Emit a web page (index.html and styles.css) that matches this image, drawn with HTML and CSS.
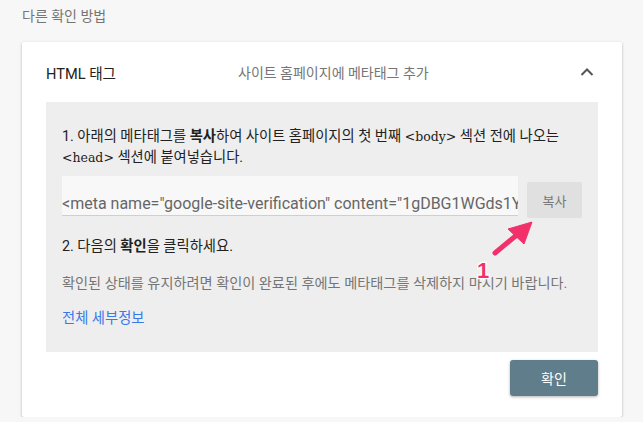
FILE: index.html
```html
<!DOCTYPE html>
<html lang="ko">
<head>
<meta charset="utf-8">
<link rel="stylesheet" href="styles.css">
</head>
<body>
<div class="page">
  <div class="section-title">다른 확인 방법</div>
  <div class="card">
    <div class="card-header">
      <div class="method">HTML 태그</div>
      <div class="method-desc">사이트 홈페이지에 메타태그 추가</div>
      <svg class="chevron" width="14" height="10" viewBox="0 0 14 10"><path d="M1.5 8 L7 2.5 L12.5 8" fill="none" stroke="#555" stroke-width="2"/></svg>
    </div>
    <div class="panel">
      <p class="step">1. 아래의 메타태그를 <b>복사</b>하여 사이트 홈페이지의 첫 번째 <code>&lt;body&gt;</code> 섹션 전에 나오는 <code>&lt;head&gt;</code> 섹션에 붙여넣습니다.</p>
      <div class="copy-row">
        <div class="meta-field"><span>&lt;meta name="google-site-verification" content="1gDBG1WGds1YxK7q"</span></div>
        <button class="copy-btn">복사</button>
      </div>
      <p class="step step2">2. 다음의 <b>확인</b>을 클릭하세요.</p>
      <p class="note">확인된 상태를 유지하려면 확인이 완료된 후에도 메타태그를 삭제하지 마시기 바랍니다.</p>
      <a class="details" href="#">전체 세부정보</a>
    </div>
    <div class="actions">
      <button class="confirm-btn">확인</button>
    </div>
  </div>
  <svg class="annotation" width="80" height="80" viewBox="0 0 80 80">
    <path d="M23 39 L46 20" stroke="#f2316b" stroke-width="5" stroke-linecap="round"/>
    <path d="M60 8 L36 15 L52 30 Z" fill="#f2316b" stroke="#f2316b" stroke-width="1" stroke-linejoin="round"/>
    <text x="5" y="64" class="anno-num">1</text>
  </svg>
</div>
</body>
</html>
```
FILE: styles.css
```css
html, body {
  margin: 0;
  padding: 0;
  background: #f7f7f7;
}
body {
  font-family: Roboto, "Noto Sans CJK KR", sans-serif;
  color: #212121;
}
.page {
  position: relative;
  padding: 6px 21px 0 22px;
}
.section-title {
  font-size: 14px;
  line-height: 20px;
  color: #757575;
  height: 36px;
}
.card {
  width: 600px;
  background: #fff;
  border-radius: 2px;
  box-shadow: 0 1px 3px rgba(0,0,0,0.28);
}
.card-header {
  display: flex;
  align-items: center;
  height: 60px;
  padding: 0 28px 0 24px;
}
.method {
  width: 192px;
  font-size: 14.6px;
  color: #212121;
}
.method-desc {
  flex: 1;
  font-size: 14px;
  color: #757575;
}
.chevron {
  display: block;
}
.panel {
  margin: 0 24px;
  background: #eeeeee;
  padding: 24px 16px 24px 16px;
  height: 202px;
}
.step {
  margin: 0;
  font-size: 14.3px;
  line-height: 21px;
  color: #212121;
}
.step b {
  font-weight: 700;
}
code {
  font-family: "DejaVu Serif", serif;
  font-size: 12.5px;
}
.copy-row {
  display: flex;
  align-items: flex-start;
  margin-top: 8px;
  gap: 9px;
}
.meta-field {
  width: 456px;
  height: 39px;
  background: #f8f8f8;
  border-bottom: 1px solid #cfcfcf;
  overflow: hidden;
  white-space: nowrap;
  display: flex;
  align-items: flex-end;
}
.meta-field span {
  font-size: 16px;
  color: #666;
  line-height: 20px;
  padding-bottom: 1px;
}
.copy-btn {
  margin-top: 6px;
  width: 55px;
  height: 36px;
  border: none;
  border-radius: 2px;
  background: #e0e0e0;
  color: #777;
  font-family: Roboto, "Noto Sans CJK KR", sans-serif;
  font-size: 13px;
}
.step2 {
  margin-top: 18px;
}
.note {
  margin: 16px 0 0;
  font-size: 14.2px;
  line-height: 21px;
  color: #757575;
}
.details {
  display: block;
  margin-top: 14px;
  font-size: 14.3px;
  line-height: 21px;
  color: #3b78e7;
  text-decoration: none;
}
.actions {
  display: flex;
  justify-content: flex-end;
  padding: 8px 24px 21px;
}
.confirm-btn {
  width: 88px;
  height: 36px;
  border: none;
  border-radius: 3px;
  background: #607d8b;
  color: #fff;
  font-family: Roboto, "Noto Sans CJK KR", sans-serif;
  font-size: 14px;
  box-shadow: 0 1px 3px rgba(0,0,0,0.3);
}
.annotation {
  position: absolute;
  left: 472px;
  top: 214px;
}
.anno-num {
  font-family: "Liberation Sans", sans-serif;
  font-weight: 700;
  font-size: 22px;
  fill: #f2316b;
  stroke: #fff;
  stroke-width: 2.5px;
  paint-order: stroke;
}
```
